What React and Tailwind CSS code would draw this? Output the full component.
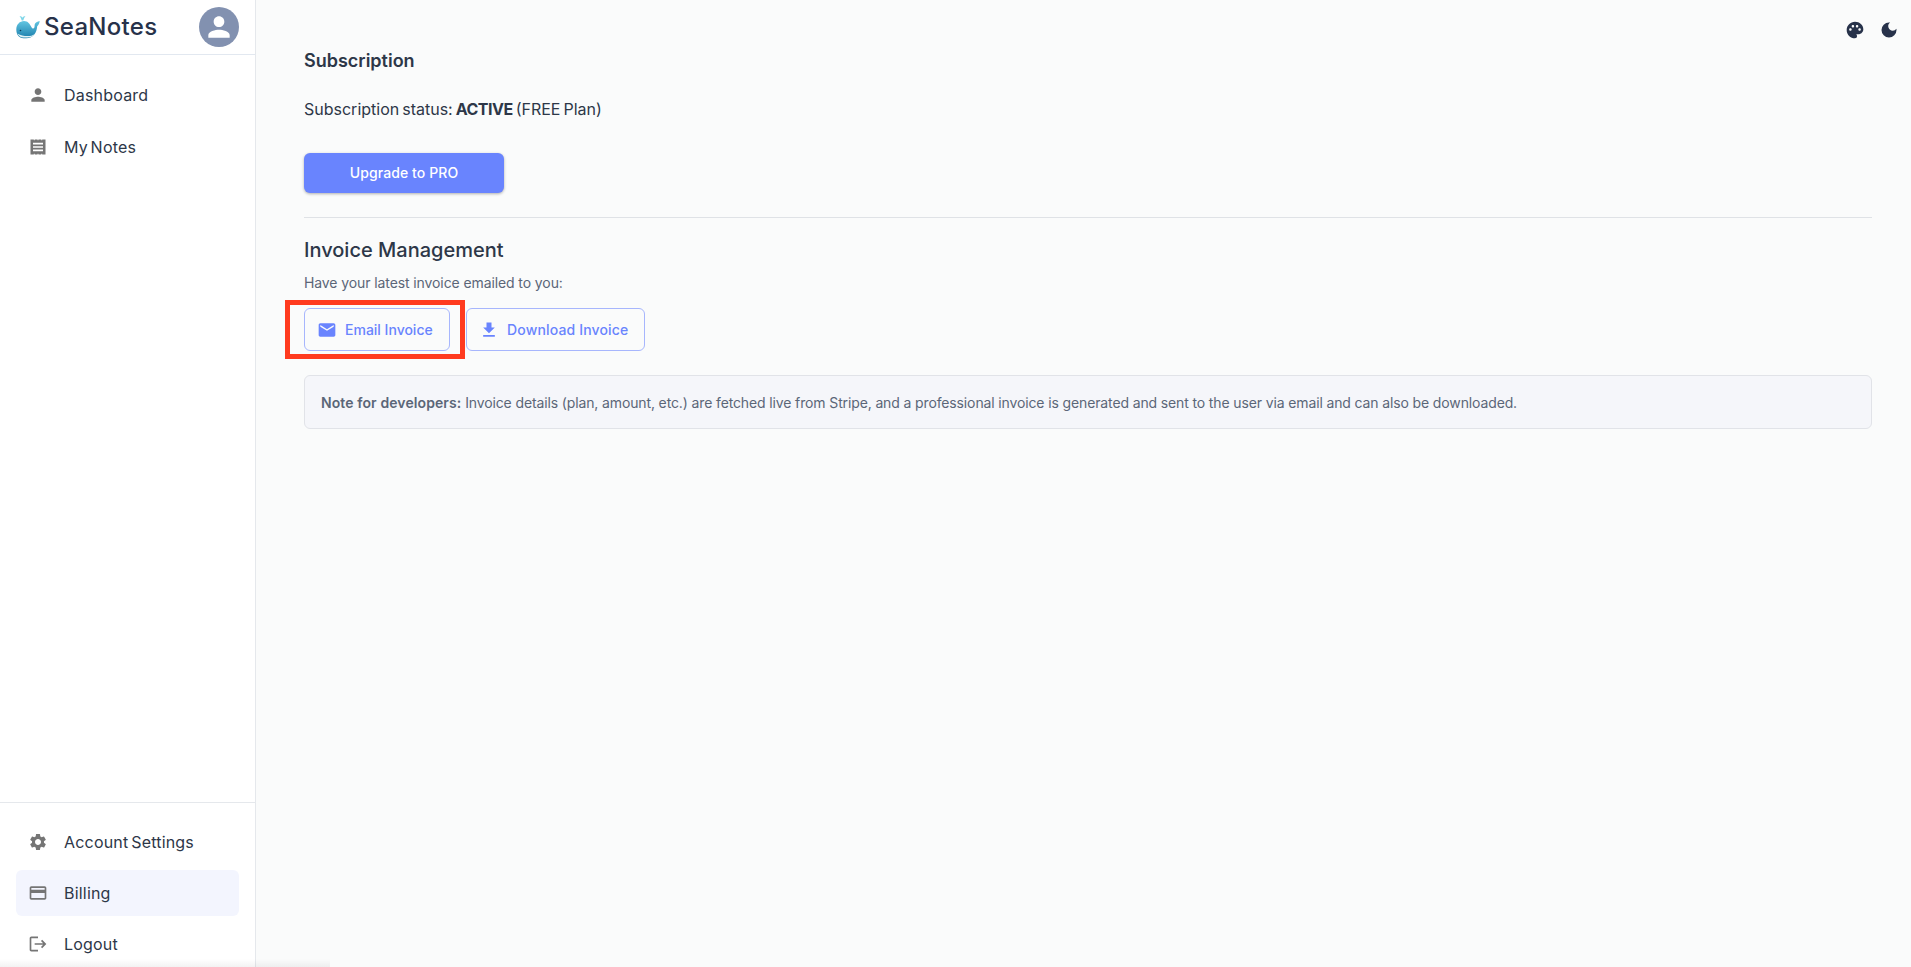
import { MdPerson, MdSettings, MdCreditCard, MdLogout, MdEmail, MdFileDownload, MdPalette, MdDarkMode } from 'react-icons/md'

function NotesIcon({ className }) {
    return (
        <svg viewBox="0 0 24 24" className={className} fill="currentColor">
            <path fillRule="evenodd" d="M3 3h18v18H3zM6 7v2h12V7zm0 4v2h12v-2zm0 4v2h12v-2zM7 3v1h1V3zm4.500 0v1h1V3zM16 3v1h1V3zM7 20v1h1v-1zm4.500 0v1h1v-1zM16 20v1h1v-1z" />
        </svg>
    )
}

function WhaleLogo() {
    return (
        <svg viewBox="0 0 24 24" className="h-6 w-6 shrink-0">
            <defs>
                <linearGradient id="whale" x1="0" y1="0" x2="0" y2="1">
                    <stop offset="0" stopColor="#62c6e2" />
                    <stop offset="1" stopColor="#1a7dab" />
                </linearGradient>
            </defs>
            <path d="M3.500 1c1.300.2 2.500.8 3 1.800C7 1.800 8.200 1.200 9.500 1 8.800 2 7.800 3.200 7.300 5.500H5.700C5.200 3.200 4.200 2 3.500 1z" fill="#7fd6e8" />
            <path d="M.3 14.500C.3 9.500 3.800 6 8 6c4 0 5.800 3 7.500 6.300.9 1.800 2.500 1.500 3-.3l.2-2.500c.2-1.500 2.800-3.200 5-3.500-.2 2.200-1.200 4.300-2.500 5.300-.4 6-3.700 12-11 12H7.500C3 23 .3 19.500.3 14.500z" fill="url(#whale)" />
            <path d="M1.500 18.500c3 2 6.500 2.500 10 2.500 3 0 5-.5 7-1.800-1.500 2.300-4 3.300-7 3.300H7.500c-2.800 0-4.800-1.500-6-4z" fill="#dff1f4" />
            <circle cx="4.500" cy="15.500" r=".8" fill="#0d3a55" />
        </svg>
    )
}

function NavItem({ icon: Icon, label, active }) {
    return (
        <div className={`flex h-12 items-center gap-4 rounded-md px-3 ${active ? 'bg-[#f3f5fe]' : ''}`}>
            <Icon className="h-5 w-5 shrink-0 text-[#757575]" />
            <span className="text-base tracking-[0.2px] text-[#2d3748] [word-spacing:-2px]">{label}</span>
        </div>
    )
}

function OutlineButton({ icon: Icon, label, className }) {
    return (
        <button className={`flex h-[43px] items-center gap-2 rounded-md border border-[#a7b6fd] pl-3 pt-px text-sm font-medium text-[#6984fe] ${className}`}>
            <Icon className="h-5 w-5 shrink-0" />
            {label}
        </button>
    )
}

export default function App() {
    return (
        <div className='relative flex h-screen w-full overflow-hidden bg-[#fafbfb] font-["Inter",sans-serif] text-[#2d3748]'>
            <aside className="flex h-full w-[256px] shrink-0 flex-col border-r border-[#e5e8ec] bg-white">
                <div className="flex h-[55px] shrink-0 items-center justify-between border-b border-[#e2e8f0] px-4">
                    <div className="flex items-center gap-1">
                        <WhaleLogo />
                        <span className="text-2xl font-medium leading-none tracking-[0.3px] text-[#27324a]">SeaNotes</span>
                    </div>
                    <div className="grid h-10 w-10 place-items-center rounded-full bg-[#8291b0]">
                        <MdPerson className="h-8 w-8 text-white" />
                    </div>
                </div>
                <nav className="flex flex-1 flex-col gap-1 px-4 pt-4">
                    <NavItem icon={MdPerson} label="Dashboard" />
                    <NavItem icon={NotesIcon} label="My Notes" />
                </nav>
                <div className="flex h-[165px] shrink-0 flex-col gap-1 border-t border-[#e5e8ec] px-4 pt-4">
                    <NavItem icon={MdSettings} label="Account Settings" />
                    <NavItem icon={MdCreditCard} label="Billing" active />
                    <NavItem icon={MdLogout} label="Logout" />
                </div>
            </aside>

            <main className="relative flex-1 pl-12 pr-[39px] pt-[49px]">
                <div className="absolute right-3 top-5 flex items-center gap-[14px] text-[#27324a]">
                    <MdPalette className="h-5 w-5" />
                    <MdDarkMode className="h-5 w-5" />
                </div>

                <h2 className="text-lg font-semibold leading-6">Subscription</h2>
                <p className="mt-6 text-base leading-6 [word-spacing:-1.5px]">
                    Subscription status: <strong className="font-bold tracking-[-0.5px]">ACTIVE</strong> (FREE Plan)
                </p>
                <button className="mt-8 block h-10 w-[200px] rounded-md bg-[#6984fe] text-sm font-medium tracking-[0.1px] text-white shadow-[0_1px_3px_rgba(0,0,0,0.3)]">
                    Upgrade to PRO
                </button>
                <hr className="mt-6 border-[#dfe2e6]" />
                <h3 className="mt-5 text-xl font-medium leading-6">Invoice Management</h3>
                <p className="mt-[11px] text-sm leading-5 tracking-[-0.1px] text-[#5b6678]">Have your latest invoice emailed to you:</p>

                <div className="mt-[15px] flex gap-4">
                    <div className="relative">
                        <OutlineButton icon={MdEmail} label="Email Invoice" className="w-[146px]" />
                        <div className="pointer-events-none absolute -bottom-2 -left-[19px] -right-[15px] -top-2 border-[5px] border-[#ff3b1f]" />
                    </div>
                    <OutlineButton icon={MdFileDownload} label="Download Invoice" className="w-[179px] tracking-[0.15px]" />
                </div>

                <div className="mt-6 flex h-[54px] items-center rounded-md border border-[#e1e3e8] bg-[#f5f6fa] px-4 pt-[2px] text-sm tracking-[-0.13px] text-[#5b6678]">
                    <p><strong className="font-semibold tracking-[0.1px]">Note for developers:</strong> Invoice details (plan, amount, etc.) are fetched live from Stripe, and a professional invoice is generated and sent to the user via email and can also be downloaded.</p>
                </div>
            </main>

            <div className="pointer-events-none absolute bottom-0 left-0 h-2 w-[330px] bg-linear-to-t from-black/5 to-transparent" />
        </div>
    )
}
